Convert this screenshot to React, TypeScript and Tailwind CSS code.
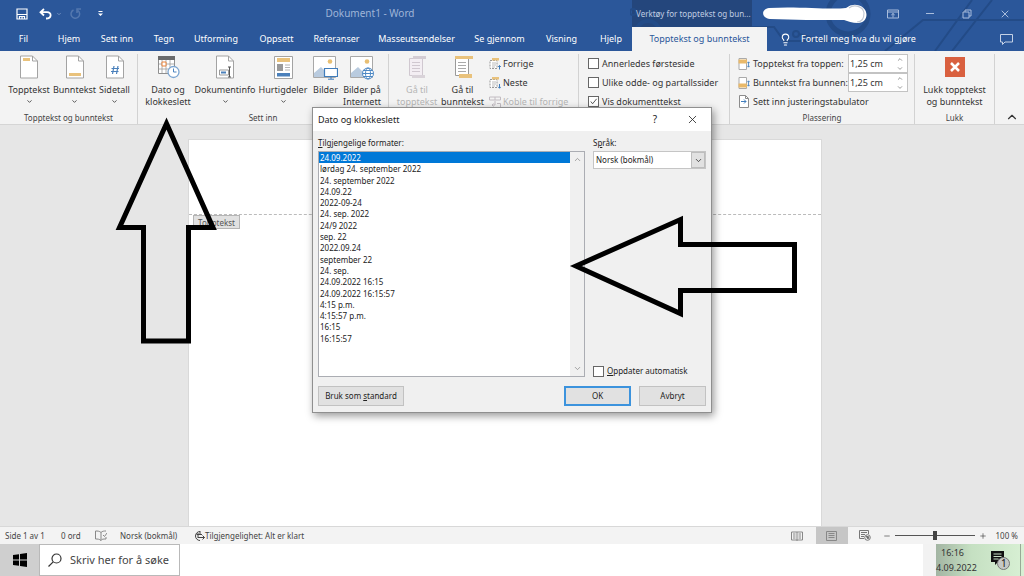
import { useState } from 'react'
import type { ReactNode } from 'react'
import { ChevronDown, ChevronUp, Lightbulb, Minus, Plus, X } from 'lucide-react'

const tabs = [
  { label: 'Fil', width: 'w-[47px]' },
  { label: 'Hjem', width: 'w-[44px]' },
  { label: 'Sett inn', width: 'w-[52px]' },
  { label: 'Tegn', width: 'w-[42px]' },
  { label: 'Utforming', width: 'w-[62px]' },
  { label: 'Oppsett', width: 'w-[59px]' },
  { label: 'Referanser', width: 'w-[61px]' },
  { label: 'Masseutsendelser', width: 'w-[99px]' },
  { label: 'Se gjennom', width: 'w-[67px]' },
  { label: 'Visning', width: 'w-[57px]' },
  { label: 'Hjelp', width: 'w-[42px]' },
]

const formats = [
  '24.09.2022',
  'lørdag 24. september 2022',
  '24. september 2022',
  '24.09.22',
  '2022-09-24',
  '24. sep. 2022',
  '24/9 2022',
  'sep. 22',
  '2022.09.24',
  'september 22',
  '24. sep.',
  '24.09.2022 16:15',
  '24.09.2022 16:15:57',
  '4:15 p.m.',
  '4:15:57 p.m.',
  '16:15',
  '16:15:57',
]

function PageIcon({ children }: { children?: ReactNode }) {
  return (
    <svg width="18" height="24" viewBox="0 0 18 24" fill="none">
      <path d="M.5 1h12l5 5v17H.5z" fill="#fff" stroke="#a3a3a3" />
      <path d="M12.500 1v5h5" stroke="#a3a3a3" />
      {children}
    </svg>
  )
}

function CalendarIcon() {
  return (
    <svg width="23" height="24" viewBox="0 0 23 24" fill="none">
      <path d="M1.500 1.500h16v17h-16z" fill="#fff" stroke="#8f8f8f" />
      <path d="M1 1h17v4H1z" fill="#6b6b6b" />
      <path d="M5 5v13M9 5v13M13 5v13M2 9h15M2 14h15" stroke="#9c9c9c" strokeWidth=".8" />
      <path d="M5 7h4v4H5z" fill="#fff" stroke="#e8833a" />
      <circle cx="16.500" cy="17" r="5.500" fill="#fff" stroke="#7ba5d1" strokeWidth="1.300" />
      <path d="M16.500 13.500V17h3" stroke="#4c84bf" />
    </svg>
  )
}

function QuickPartsIcon() {
  return (
    <svg width="19" height="24" viewBox="0 0 19 24" fill="none">
      <path d="M.5 1.500h18v22H.5z" fill="#fff" stroke="#a3a3a3" />
      <path d="M3 3h13v4H3z" fill="#e9c27c" />
      <path d="M3 9h6v7H3z" fill="#999" />
      <path d="M11 10h5M11 12.500h5M11 15h5" stroke="#b4b4b4" />
      <path d="M3 18h13v3.500H3z" fill="#4a80bb" />
    </svg>
  )
}

function PictureIcon({ online = false }: { online?: boolean }) {
  return (
    <svg width="25" height="25" viewBox="0 0 25 25" fill="none">
      <path d="M.5 1.500h22v21H.5z" fill="#fff" stroke="#a8a8a8" />
      <path d="M1 22v-4l7-6 4 4 2-2 8 4v4z" fill="#b9cbdf" />
      <circle cx="17" cy="6.500" r="2.300" fill="#e8bf73" />
      {online ? (
        <g stroke="#4f89c4">
          <circle cx="18" cy="18.500" r="5.500" fill="#fff" />
          <ellipse cx="18" cy="18.500" rx="2.500" ry="5.500" />
          <path d="M12.500 18.500h11M13.500 15.500h9M13.500 21.500h9" />
        </g>
      ) : (
        <g stroke="#3f7cbb">
          <path d="M11.500 13.500h13v8h-13z" fill="#fff" strokeWidth="1.200" />
          <path d="M18 21.500v2.500M15 24.200h6" />
        </g>
      )}
    </svg>
  )
}

function GoToIcon({ footer = false }: { footer?: boolean }) {
  return (
    <svg width="20" height="24" viewBox="0 0 20 24" fill="none">
      <path d="M2.500 3.500h13v17h-13z" fill={footer ? '#fff' : '#f3eef3'} stroke={footer ? '#9a9a9a' : '#d0c8d0'} />
      <path d="M5 7.500h8M5 10.500h8M5 13.500h8M5 16.500h8" stroke={footer ? '#aaa' : '#d0c8d0'} />
      <path d={footer ? 'M2 1h18v3H2z' : 'M6 1h13v3H6z'} fill={footer ? '#e9c27c' : '#d3ccd3'} />
      <path d={footer ? 'M6 19h13v4H6z' : 'M5 20h13v3H5z'} fill={footer ? '#e9c27c' : '#d9d3d9'} />
    </svg>
  )
}

function SectionIcon({ up = false }: { up?: boolean }) {
  return (
    <svg width="12" height="12" viewBox="0 0 12 12" fill="none">
      <path d="M1 2.500h7v8H1z" fill="#fff" stroke="#999" strokeDasharray="2 1" />
      <path d="M3 5h4M3 7h4M3 9h3" stroke="#aaa" strokeWidth=".8" />
      <path d="M3 0h7v2.500H3z" fill="#e9c27c" />
      <path d={up ? 'M10.500 11.500v-4M9.200 9l1.300-1.500L11.800 9' : 'M10.500 7v4M9.200 9.800l1.300 1.500 1.300-1.500'} stroke="#3f7cbb" />
    </svg>
  )
}

function LinkPreviousIcon() {
  return (
    <svg width="12" height="12" viewBox="0 0 12 12" fill="none" stroke="#c2bcc2">
      <path d="M.5 1h11v3H.5zM6 1v3M6 5v4H3M4.500 7.500L3 9l1.500 1.500M8 7.500h3.500v4H6" />
    </svg>
  )
}

function DistanceIcon({ footer = false }: { footer?: boolean }) {
  return (
    <svg width="12" height="12" viewBox="0 0 12 12" fill="none">
      <path d="M1 .5h7.500v11H1z" fill="#fff" stroke="#aaa" />
      <path d={footer ? 'M.5 6.500h8.500v4H.5z' : 'M.5 1.500h8.500v4H.5z'} fill="#e9b96a" />
      <path d="M10.500 4v5M9.200 5.200l1.300-1.400 1.300 1.400M9.200 7.800l1.300 1.400 1.300-1.400" stroke="#3f7cbb" strokeWidth=".8" />
    </svg>
  )
}

function AlignTabIcon() {
  return (
    <svg width="10" height="13" viewBox="0 0 10 13" fill="none">
      <path d="M.5.5h6l3 3v9h-9z" fill="#fff" stroke="#8c8c8c" />
      <path d="M6.500.5v3h3" stroke="#8c8c8c" />
      <path d="M2 6.500h5M5 4.500l2 2-2 2" stroke="#3f7cbb" />
    </svg>
  )
}

type BigButtonProps = {
  icon: ReactNode
  lines: string[]
  width: string
  disabled?: boolean
  menu?: boolean
}

function BigButton({ icon, lines, width, disabled, menu }: BigButtonProps) {
  return (
    <button
      disabled={disabled}
      className={`${width} flex shrink-0 flex-col items-center whitespace-nowrap leading-3 disabled:text-[#b5b5b5]`}
    >
      <span className="mb-1 flex h-[26px] items-center">{icon}</span>
      {lines.map((line) => (
        <span key={line}>{line}</span>
      ))}
      {menu && <ChevronDown className="mt-[2px] h-[7px] w-[7px] text-[#444]" strokeWidth={3} />}
    </button>
  )
}

function Group({ label, width, children }: { label?: string; width: string; children: ReactNode }) {
  return (
    <section className={`${width} mt-[3px] flex shrink-0 flex-col border-r border-[#d2d2d2]`}>
      <div className="flex h-[58px]">{children}</div>
      {label && <h2 className="text-center text-[8px] leading-3 text-[#444]">{label}</h2>}
    </section>
  )
}

type CheckProps = {
  label: ReactNode
  checked?: boolean
  className?: string
}

function Check({ label, checked = false, className = '' }: CheckProps) {
  return (
    <label className={`${className} flex items-center gap-[3px] whitespace-nowrap`}>
      <span className="grid h-[11px] w-[11px] shrink-0 place-items-center">
        <input
          type="checkbox"
          defaultChecked={checked}
          className="peer col-start-1 row-start-1 h-[11px] w-[11px] appearance-none border border-[#666] bg-white"
        />
        <svg
          viewBox="0 0 10 10"
          className="pointer-events-none invisible col-start-1 row-start-1 h-[9px] w-[9px] peer-checked:visible"
          fill="none"
          stroke="#444"
        >
          <path d="M2 5l2 2.500L8.500 2" />
        </svg>
      </span>
      <span>{label}</span>
    </label>
  )
}

function DistanceField({ id, label, footer }: { id: string; label: string; footer?: boolean }) {
  return (
    <div className="flex h-[19px] items-center">
      <DistanceIcon footer={footer} />
      <label htmlFor={id} className="ml-[3px] w-[95px] whitespace-nowrap">
        {label}
      </label>
      <div className="flex h-[19px] w-[60px] items-center border border-[#c3c3c3] bg-white">
        <input id={id} defaultValue="1,25 cm" className="w-[47px] pl-px outline-none" />
        <div className="flex flex-col gap-[2px] text-[#555]">
          <button aria-label="Øk">
            <ChevronUp className="h-[7px] w-[8px]" />
          </button>
          <button aria-label="Reduser">
            <ChevronDown className="h-[7px] w-[8px]" />
          </button>
        </div>
      </div>
    </div>
  )
}

function Header() {
  return (
    <header className="relative shrink-0 bg-[#2b579a] text-white">
      {/* Circuit decoration */}
      <svg className="absolute right-0 top-0 h-[51px] w-[394px]" viewBox="0 0 394 51" fill="none" stroke="#234b87">
        <path d="M2 0h120v27H2z" fill="#24467c" stroke="none" />
        <circle cx="3" cy="12" r="3" strokeWidth="2" />
        <circle cx="18" cy="33" r="12" strokeWidth="4" />
        <circle cx="218" cy="14" r="20" strokeWidth="5" />
        <path d="M211 8l11 11m0-8v8h-8" strokeWidth="3" />
        <path d="M122 27h22l10 14h64M169 34l24 7M255 51l38-31h101M305 51l37-51M322 51l40-51" strokeWidth="2" />
        <circle cx="166" cy="34" r="3" strokeWidth="2" />
      </svg>

      <div className="relative flex h-[27px] items-center text-[#a9bddc]">
        <div className="flex w-[120px] items-center">
          <button aria-label="Lagre" className="ml-4">
            <svg width="12" height="12" viewBox="0 0 12 12" fill="none" stroke="#fff" strokeWidth="1.200">
              <path d="M1 1h10v10H1zM1 6.500h10M3.500 11V8.500h5V11M6 9v2" />
            </svg>
          </button>
          <button aria-label="Angre" className="ml-[11px]">
            <svg width="13" height="12" viewBox="0 0 13 12" fill="none" stroke="#fff" strokeWidth="1.800">
              <path d="M5 1L1.500 4.200 5 7.500M2 4.200h6c5 0 5 6.300-1 6.300" />
            </svg>
          </button>
          <ChevronDown className="ml-1 h-[6px] w-[6px]" />
          <button aria-label="Gjenta" className="ml-[8px]">
            <svg width="12" height="12" viewBox="0 0 12 12" fill="none" stroke="#5478af" strokeWidth="1.500">
              <path d="M8 2.500A4.300 4.300 0 1 1 3.500 2M7 5V1h4" />
            </svg>
          </button>
          <svg className="ml-4" width="5" height="6" viewBox="0 0 5 6" fill="#fff">
            <path d="M.5 0h4v1h-4zM0 2.500h5L2.500 5z" />
          </svg>
        </div>
        <h1 className="flex-1 whitespace-pre pr-[12px] text-center text-[10px] text-[#9fb5d8]">Dokument1 - Word</h1>
        <div className="flex w-[392px] shrink-0 items-center">
          <span className="w-[122px] whitespace-nowrap pl-1 text-[8px] text-[#c0cde2]">Verktøy for topptekst og bun...</span>
          <svg className="ml-1" width="114" height="24" viewBox="0 0 114 24">
            <path
              d="M11 6C40 4 70 8 88 6q5-4 11-3c13 2 12 18 1 18-6 0-10-2-14-3-25 0-50 0-74-1-9-1-9-10-1-11z"
              fill="#fff"
            />
            <path d="M91 6c5-4 14-2 15 5 0 6-3 9-7 9" fill="none" stroke="#c3c9d3" strokeWidth="1.200" />
          </svg>
          <div className="ml-auto flex items-center">
            <button aria-label="Alternativer for båndvisning" className="mr-[26px]">
              <svg width="12" height="10" viewBox="0 0 12 10" fill="none" stroke="currentColor">
                <path d="M.5 1h11v8H.5zM.5 3h11M6 8.500V4.500M4.300 6L6 4.500 7.700 6" />
              </svg>
            </button>
            <button aria-label="Minimer" className="mr-[27px]">
              <svg width="10" height="10" viewBox="0 0 10 10" stroke="currentColor">
                <path d="M1 4.500h8" />
              </svg>
            </button>
            <button aria-label="Gjenopprett" className="mr-[27px]">
              <svg width="10" height="10" viewBox="0 0 10 10" fill="none" stroke="currentColor">
                <path d="M1 3h6v6H1zM3 3V1h6v6H7" />
              </svg>
            </button>
            <button aria-label="Lukk" className="mr-[13px]">
              <X className="h-[12px] w-[12px]" strokeWidth={2} />
            </button>
          </div>
        </div>
      </div>

      <nav className="relative flex h-6 items-stretch text-[9px]">
        {tabs.map((tab) => (
          <button key={tab.label} className={`${tab.width} shrink-0 whitespace-nowrap text-center`}>
            {tab.label}
          </button>
        ))}
        <button className="w-[135px] shrink-0 whitespace-nowrap bg-[#f3f3f3] text-[#2b579a]">
          Topptekst og bunntekst
        </button>
        <button className="ml-3 flex items-center gap-[9px] whitespace-nowrap">
          <Lightbulb className="h-[13px] w-[13px]" strokeWidth={2} />
          Fortell meg hva du vil gjøre
        </button>
        <button aria-label="Kommentarer" className="ml-auto mr-[11px]">
          <svg width="13" height="11" viewBox="0 0 13 11" fill="none" stroke="#c5d2e6">
            <path d="M.5.5h12v7.500H5L2.500 10.500V8h-2z" />
          </svg>
        </button>
      </nav>
    </header>
  )
}

function Ribbon() {
  return (
    <div className="flex shrink-0 border-b border-[#d5d5d5] bg-[#f3f3f3] text-[9px] text-[#333]">
      <Group label="Topptekst og bunntekst" width="w-[138px]">
        <BigButton
          menu
          width="ml-[6px] w-[46px]"
          lines={['Topptekst']}
          icon={<PageIcon><path d="M3 3h7v3H3z" fill="#e9c27c" /></PageIcon>}
        />
        <BigButton
          menu
          width="w-[45px]"
          lines={['Bunntekst']}
          icon={<PageIcon><path d="M3 18h12v3H3z" fill="#e9c27c" /></PageIcon>}
        />
        <BigButton
          menu
          width="w-[35px]"
          lines={['Sidetall']}
          icon={
            <PageIcon>
              <path d="M8 11l-1.500 8M12 11l-1.500 8M5.500 13.500h7.500M5 16.500h7.500" stroke="#4a80bb" strokeWidth="1.200" />
            </PageIcon>
          }
        />
      </Group>

      <Group label="Sett inn" width="w-[251px]">
        <BigButton width="ml-[4px] w-[52px]" lines={['Dato og', 'klokkeslett']} icon={<CalendarIcon />} />
        <BigButton
          menu
          width="w-[62px]"
          lines={['Dokumentinfo']}
          icon={
            <PageIcon>
              <path d="M3.500 15h9v5h-9z" fill="#fff" stroke="#999" />
              <path d="M5 16.500h5v2H5z" fill="#4a80bb" />
              <path d="M13.500 12v10M12 12h3M12 22h3" stroke="#555" />
            </PageIcon>
          }
        />
        <BigButton menu width="w-[54px]" lines={['Hurtigdeler']} icon={<QuickPartsIcon />} />
        <BigButton width="w-[31px]" lines={['Bilder']} icon={<PictureIcon />} />
        <BigButton width="w-[42px]" lines={['Bilder på', 'Internett']} icon={<PictureIcon online />} />
      </Group>

      <Group width="w-[190px]">
        <BigButton width="ml-[6px] w-[44px]" lines={['Gå til', 'topptekst']} icon={<GoToIcon />} disabled />
        <BigButton width="w-[47px]" lines={['Gå til', 'bunntekst']} icon={<GoToIcon footer />} />
        <div className="ml-[3px] flex flex-col whitespace-nowrap">
          <button className="flex h-[19px] items-center gap-[2px]"><SectionIcon up />Forrige</button>
          <button className="flex h-[19px] items-center gap-[2px]"><SectionIcon />Neste</button>
          <button disabled className="flex h-[19px] items-center gap-[2px] text-[#b5b5b5]">
            <LinkPreviousIcon />Koble til forrige
          </button>
        </div>
      </Group>

      <Group width="w-[151px]">
        <div className="ml-[9px] flex flex-col">
          <Check className="h-[19px]" label="Annerledes førsteside" />
          <Check className="h-[19px]" label="Ulike odde- og partallssider" />
          <Check className="h-[19px]" label="Vis dokumenttekst" checked />
        </div>
      </Group>

      <Group label="Plassering" width="w-[185px]">
        <div className="ml-[8px] flex flex-col">
          <DistanceField id="header-distance" label="Topptekst fra toppen:" />
          <DistanceField id="footer-distance" label="Bunntekst fra bunnen:" footer />
          <button className="flex h-[19px] items-center gap-[4px] whitespace-nowrap pl-px">
            <AlignTabIcon />Sett inn justeringstabulator
          </button>
        </div>
      </Group>

      <Group label="Lukk" width="w-[80px]">
        <BigButton
          width="w-full"
          lines={['Lukk topptekst', 'og bunntekst']}
          icon={
            <svg width="20" height="20" viewBox="0 0 20 20">
              <path d="M0 0h20v20H0z" fill="#d9603f" />
              <path d="M6 6l8 8M14 6l-8 8" stroke="#fff" strokeWidth="2.500" />
            </svg>
          }
        />
      </Group>

      <button aria-label="Skjul båndet" className="ml-auto mr-[5px] self-end">
        <ChevronUp className="h-[14px] w-[14px]" />
      </button>
    </div>
  )
}

function DateDialog() {
  const [selected, setSelected] = useState(0)

  return (
    <div
      role="dialog"
      aria-labelledby="dialog-title"
      className="absolute left-1/2 top-[107px] w-[400px] -translate-x-1/2 border border-[#8f8f8f] bg-[#f0f0f0] text-[8px] text-[#222] shadow-[2px_3px_8px_rgba(0,0,0,0.4)]"
    >
      <div className="flex h-[23px] items-center bg-white pl-[5px]">
        <h2 id="dialog-title" className="flex-1 text-[9px]">Dato og klokkeslett</h2>
        <button aria-label="Hjelp" className="mr-[29px] text-[10px]">?</button>
        <button aria-label="Lukk" className="mr-[12px]">
          <X className="h-[13px] w-[13px]" strokeWidth={1.500} />
        </button>
      </div>

      <div className="flex gap-2 px-[5px] pt-[6px]">
        <div className="flex-1">
          <div id="formats-label" className="leading-3"><u>T</u>ilgjengelige formater:</div>
          <div className="mt-[2px] flex h-[226px] border border-[#abadb3] bg-white">
            <ul role="listbox" aria-labelledby="formats-label" className="grid h-[192px] flex-1">
              {formats.map((format, i) => (
                <li
                  key={format}
                  role="option"
                  aria-selected={i === selected}
                  onClick={() => setSelected(i)}
                  className="px-px leading-[11px] aria-selected:bg-[#0078d7] aria-selected:text-white"
                >
                  {format}
                </li>
              ))}
            </ul>
            <div className="flex w-[14px] flex-col items-center justify-between bg-[#f0f0f0] py-[3px] text-[#888]">
              <ChevronUp className="h-[9px] w-[9px]" />
              <ChevronDown className="h-[9px] w-[9px]" />
            </div>
          </div>
        </div>

        <div className="flex w-[113px] flex-col">
          <label htmlFor="language" className="leading-3">S<u>p</u>råk:</label>
          <div className="mt-[2px] grid h-[18px] items-stretch border border-[#c5c5c5] bg-white">
            <select id="language" className="col-start-1 row-start-1 w-full appearance-none pl-[2px] outline-none">
              <option>Norsk (bokmål)</option>
            </select>
            <span className="pointer-events-none col-start-1 row-start-1 flex w-[14px] items-center justify-center justify-self-end border border-[#bdbdbd] bg-[#e1e1e1]">
              <ChevronDown className="h-[9px] w-[9px]" />
            </span>
          </div>
          <Check className="mt-auto" label={<><u>O</u>ppdater automatisk</>} />
        </div>
      </div>

      <div className="flex gap-2 px-[5px] pb-[6px] pt-[9px]">
        <button className="mr-auto h-[20px] w-[86px] border border-[#c2c2c2] bg-[#e1e1e1]">
          Bruk som <u>s</u>tandard
        </button>
        <button className="h-[20px] w-[67px] border-2 border-[#3c93dd] bg-[#e1e1e1]">OK</button>
        <button className="h-[20px] w-[67px] border border-[#c2c2c2] bg-[#e1e1e1]">Avbryt</button>
      </div>
    </div>
  )
}

function StatusBar() {
  return (
    <footer className="flex h-[18px] shrink-0 items-center border-t border-[#d8d8d8] bg-[#f3f3f3] text-[8px] text-[#444]">
      <span className="w-[61px] pl-[5px]">Side 1 av 1</span>
      <span className="w-[34px]">0 ord</span>
      <svg width="12" height="11" viewBox="0 0 12 11" fill="none" stroke="#888">
        <path d="M6 2.500C4.500 1 2.500 1 .5 1v8c2 0 4 0 5.500 1.500C7 9 8 9 11 9V7M6 2.500v8M6 2.500C7.500 1 9 1 11 1M8 5l1.500 1.500L12 3" />
      </svg>
      <span className="ml-[13px] w-[73px]">Norsk (bokmål)</span>
      <svg width="12" height="12" viewBox="0 0 12 12" fill="none" stroke="#444">
        <path d="M7 1.500A4.500 4.500 0 1 0 7 10.500M5 3v5M3.500 4.500H9M5 7.500h6.500M9.500 5.500l2 2-2 2M7 1v3" />
      </svg>
      <span>Tilgjengelighet: Alt er klart</span>

      <div className="ml-auto flex h-full items-center">
        <button aria-label="Lesemodus" className="mr-[13px]">
          <svg width="12" height="10" viewBox="0 0 12 10" fill="none" stroke="#888">
            <path d="M6 1v9M.5 1H6M.5 1v8H6M6 1h5.500v8H6M2 3h2.500M2 5h2.500M2 7h2.500M7.500 3H10M7.500 5H10M7.500 7H10" />
          </svg>
        </button>
        <button aria-label="Utskriftsoppsett" className="flex h-full w-[32px] items-center justify-center bg-[#c6c6c6]">
          <svg width="11" height="10" viewBox="0 0 11 10" fill="none" stroke="#888">
            <path d="M.5.5h10v9H.5zM2.500 2.500h6M2.500 4.500h6M2.500 6.500h6" />
          </svg>
        </button>
        <button aria-label="Weboppsett" className="ml-[11px] mr-[12px]">
          <svg width="12" height="11" viewBox="0 0 12 11" fill="none" stroke="#777">
            <path d="M9.500 4V.5h-9v8H5M2 2.500h6M2 4.500h4M2 6.500h3" />
            <circle cx="8.500" cy="7.500" r="2.800" />
            <path d="M7 6l3 1-1 2z" fill="#555" />
          </svg>
        </button>
        <button aria-label="Zoom ut"><Minus className="h-[8px] w-[8px]" /></button>
        <input
          type="range"
          aria-label="Zoom"
          className="mx-1 h-[10px] w-[80px] appearance-none bg-transparent bg-[linear-gradient(#555,#555)] bg-[length:100%_1px] bg-center bg-no-repeat [&::-webkit-slider-thumb]:h-[9px] [&::-webkit-slider-thumb]:w-[4px] [&::-webkit-slider-thumb]:appearance-none [&::-webkit-slider-thumb]:bg-[#444]"
        />
        <button aria-label="Zoom inn"><Plus className="h-[8px] w-[8px]" /></button>
        <span className="ml-[9px] mr-[6px]">100 %</span>
      </div>
    </footer>
  )
}

function Taskbar() {
  return (
    <div className="flex h-8 shrink-0 bg-white text-[#333]">
      <button aria-label="Start" className="flex w-[39px] items-center justify-center bg-[#cfcfcf]">
        <svg width="14" height="14" viewBox="0 0 14 14" fill="#000">
          <path d="M0 2l6-.8v5.300H0zM7 1l7-1v6.500H7zM0 7.500h6v5.300L0 12zM7 7.500h7V14l-7-1z" />
        </svg>
      </button>
      <label className="flex w-[141px] items-center border border-[#b9b9b9] pl-[8px]">
        <svg width="14" height="14" viewBox="0 0 14 14" fill="none" stroke="#333" strokeWidth="1.200">
          <circle cx="8.500" cy="5.500" r="4.500" />
          <path d="M5.200 8.800L.5 13.500" />
        </svg>
        <input
          aria-label="Søk"
          placeholder="Skriv her for å søke"
          className="ml-[8px] w-[108px] text-[11px] outline-none placeholder:text-[#444]"
        />
      </label>
      <div className="ml-auto w-[13px] bg-[#f2f2f2]" />
      <div className="flex w-[88px] items-center bg-linear-to-r from-[#a3b5a3] via-[#c5e0c2] via-40% to-[#d8f0d4] text-[9px]">
        <div className="flex w-[42px] flex-col whitespace-nowrap leading-[15px]">
          <span className="pl-[5px]">16:16</span>
          <span>4.09.2022</span>
        </div>
        <button aria-label="Varsler" className="ml-[12px]">
          <svg width="21" height="22" viewBox="0 0 21 22">
            <path d="M1 2h13v11H8l-3 3v-3H1z" fill="#111" />
            <path d="M3.500 5h8M3.500 7.500h8M3.500 10h5" stroke="#c9dfc6" />
            <circle cx="13.500" cy="14.500" r="6" fill="#c5c8c5" stroke="#777" />
            <text x="11" y="18" fontSize="10" fill="#111">1</text>
          </svg>
        </button>
        <div className="ml-auto mr-[3px] h-full w-px bg-[#98aa96]" />
      </div>
    </div>
  )
}

export default function App() {
  return (
    <div className="relative flex h-screen flex-col overflow-hidden bg-[#e6e6e6] font-['Noto_Sans','Open_Sans',sans-serif]">
      <Header />
      <Ribbon />

      <main className="flex min-h-0 flex-1 justify-center pr-[14px] pt-[14px]">
        <div className="w-[634px] border border-b-0 border-[#d9d9d9] bg-white">
          <div className="h-[75px] border-b border-dashed border-[#bbb]" />
          <span className="ml-[4px] block h-[14px] w-fit border border-[#b5b5b5] bg-[#e1e1e1] px-[4px] text-[8px] leading-[13px] text-[#555]">
            Topptekst
          </span>
        </div>
      </main>

      <StatusBar />
      <Taskbar />
      <DateDialog />

      {/* Callout arrows */}
      <svg
        className="pointer-events-none absolute left-1/2 top-0 h-[576px] w-[1024px] -translate-x-1/2"
        viewBox="0 0 1024 576"
        fill="none"
        stroke="#000"
        strokeWidth="5"
        strokeMiterlimit="10"
      >
        <path d="M166.500 123.500L213 227.500h-24.500V341h-45V227.500h-24z" />
        <path d="M576 266l104.500-46.500v25h114v46h-114v23z" />
      </svg>
    </div>
  )
}
